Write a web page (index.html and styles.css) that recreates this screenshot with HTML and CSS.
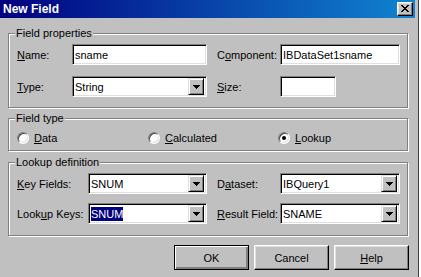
FILE: index.html
```html
<!DOCTYPE html>
<html lang="en">
<head>
    <meta charset="UTF-8">
    <title>New Field</title>
    <link rel="stylesheet" href="styles.css">
</head>
<body>
    <div class="window">
        <!-- Title bar -->
        <div class="titlebar">
            <span class="title">New Field</span>
            <div class="close">
                <svg width="8" height="7" viewBox="0 0 8 7"><path d="M0 0h2v1h-2zM6 0h2v1h-2zM1 1h2v1h-2zM5 1h2v1h-2zM2 2h4v1h-4zM3 3h2v1h-2zM2 4h4v1h-4zM1 5h2v1h-2zM5 5h2v1h-2zM0 6h2v1h-2zM6 6h2v1h-2z" fill="#000"/></svg>
            </div>
        </div>

        <!-- Field properties -->
        <fieldset class="group props">
            <legend>Field properties</legend>
            <label><u>N</u>ame:</label>
            <div class="edit">sname</div>
            <label>C<u>o</u>mponent:</label>
            <div class="edit">IBDataSet1sname</div>
            <label><u>T</u>ype:</label>
            <div class="edit combo"><span class="value">String</span><span class="drop"><svg width="7" height="4" viewBox="0 0 7 4"><path d="M0 0h7v1h-1v1h-1v1h-1v1h-1v-1h-1v-1h-1v-1h-1z" fill="#000"/></svg></span></div>
            <label><u>S</u>ize:</label>
            <div class="edit size"></div>
        </fieldset>

        <!-- Field type -->
        <fieldset class="group types">
            <legend>Field type</legend>
            <div class="radio"><span class="dot"></span><span><u>D</u>ata</span></div>
            <div class="radio"><span class="dot"></span><span><u>C</u>alculated</span></div>
            <div class="radio"><span class="dot checked"></span><span><u>L</u>ookup</span></div>
        </fieldset>

        <!-- Lookup definition -->
        <fieldset class="group lookup">
            <legend>Lookup definition</legend>
            <label><u>K</u>ey Fields:</label>
            <div class="edit combo"><span class="value">SNUM</span><span class="drop"><svg width="7" height="4" viewBox="0 0 7 4"><path d="M0 0h7v1h-1v1h-1v1h-1v1h-1v-1h-1v-1h-1v-1h-1z" fill="#000"/></svg></span></div>
            <label>D<u>a</u>taset:</label>
            <div class="edit combo"><span class="value">IBQuery1</span><span class="drop"><svg width="7" height="4" viewBox="0 0 7 4"><path d="M0 0h7v1h-1v1h-1v1h-1v1h-1v-1h-1v-1h-1v-1h-1z" fill="#000"/></svg></span></div>
            <label>Look<u>u</u>p Keys:</label>
            <div class="edit combo"><span class="value"><span class="selected">SNUM</span></span><span class="drop"><svg width="7" height="4" viewBox="0 0 7 4"><path d="M0 0h7v1h-1v1h-1v1h-1v1h-1v-1h-1v-1h-1v-1h-1z" fill="#000"/></svg></span></div>
            <label><u>R</u>esult Field:</label>
            <div class="edit combo"><span class="value">SNAME</span><span class="drop"><svg width="7" height="4" viewBox="0 0 7 4"><path d="M0 0h7v1h-1v1h-1v1h-1v1h-1v-1h-1v-1h-1v-1h-1z" fill="#000"/></svg></span></div>
        </fieldset>

        <!-- Buttons -->
        <div class="buttons">
            <div class="btn default">OK</div>
            <div class="btn">Cancel</div>
            <div class="btn"><u>H</u>elp</div>
        </div>
    </div>
</body>
</html>
```

FILE: styles.css
```css
body {
    margin: 0;
    background-color: #fff;
    font-family: "Liberation Sans", Arial, sans-serif;
    font-size: 11px;
    color: #000;
}
u {
    text-decoration-thickness: 1px;
    text-underline-offset: 1px;
}
.window {
    width: 415px;
    height: 277px;
    padding-right: 3px;
    border-right: 1px solid #404040;
    background-color: #c0c0c0;
    overflow: hidden;
}
.titlebar {
    height: 18px;
    display: flex;
    justify-content: space-between;
    align-items: center;
    padding: 0 2px 0 3px;
    background: linear-gradient(to right, #000080, #1084d0);
}
.title {
    color: #fff;
    font-weight: bold;
    font-size: 12px;
}
.close {
    width: 16px;
    height: 14px;
    box-sizing: border-box;
    display: flex;
    justify-content: center;
    align-items: center;
    padding: 0 1px 1px 0;
    background-color: #c0c0c0;
    border: 1px solid;
    border-color: #fff #000 #000 #fff;
    box-shadow: inset -1px -1px 0 #808080, inset 1px 1px 0 #dfdfdf;
}

/* group boxes */
.group {
    width: 400px;
    box-sizing: border-box;
    margin: 0 0 0 8px;
    min-width: 0;
    border: 1px solid #808080;
    box-shadow: 1px 1px 0 #fff, inset 1px 1px 0 #fff;
    display: grid;
    align-items: center;
}
.group legend {
    margin-left: -2px;
    padding: 0 1px;
    line-height: 13px;
    background-color: #c0c0c0;
}
.props {
    margin-top: 9px;
    padding: 4px 0 10px 8px;
    grid-template-columns: 55px 135px 73px 120px;
    grid-auto-rows: 21px;
    row-gap: 11px;
}
.types {
    margin-top: 4px;
    padding: 6px 0 6px 8px;
    grid-template-columns: 131px 130px 100px;
    grid-auto-rows: 13px;
}
.lookup {
    margin-top: 5px;
    padding: 4px 0 11px 8px;
    grid-template-columns: 71px 119px 73px 120px;
    grid-auto-rows: 21px;
    row-gap: 9px;
}
.group label {
    white-space: nowrap;
}
.group label:nth-of-type(even) {
    padding-left: 10px;
}

/* edits and combos */
.edit {
    height: 21px;
    box-sizing: border-box;
    display: flex;
    align-items: center;
    padding: 0 2px 0 2px;
    background-color: #fff;
    border: 1px solid;
    border-color: #808080 #fff #fff #808080;
    box-shadow: inset 1px 1px 0 #000, inset -1px -1px 0 #dfdfdf;
    white-space: nowrap;
}
.size {
    width: 56px;
}
.combo {
    padding-right: 2px;
}
.combo .value {
    flex: 1;
}
.selected {
    background-color: #000080;
    color: #fff;
    padding: 1px 0;
}
.drop {
    width: 16px;
    height: 17px;
    box-sizing: border-box;
    display: flex;
    justify-content: center;
    align-items: center;
    background-color: #c0c0c0;
    border: 1px solid;
    border-color: #dfdfdf #000 #000 #dfdfdf;
    box-shadow: inset 1px 1px 0 #fff, inset -1px -1px 0 #808080;
}

/* radio buttons */
.radio {
    display: flex;
    align-items: center;
    gap: 5px;
}
.dot {
    width: 12px;
    height: 12px;
    box-sizing: border-box;
    border-radius: 50%;
    background-color: #fff;
    border: 1px solid;
    border-color: #808080 #fff #fff #808080;
    box-shadow: inset 1px 1px 0 #404040, inset -1px -1px 0 #dfdfdf;
    display: flex;
    justify-content: center;
    align-items: center;
}
.dot.checked::after {
    content: "";
    width: 4px;
    height: 4px;
    border-radius: 50%;
    background-color: #000;
}

/* buttons */
.buttons {
    display: flex;
    justify-content: flex-end;
    gap: 5px;
    margin-top: 9px;
    padding-right: 6px;
}
.btn {
    width: 75px;
    height: 25px;
    box-sizing: border-box;
    display: flex;
    justify-content: center;
    align-items: center;
    border: 1px solid;
    border-color: #fff #000 #000 #fff;
    box-shadow: inset -1px -1px 0 #808080, inset 1px 1px 0 #dfdfdf;
}
.btn.default {
    border-color: #000;
    box-shadow: inset 1px 1px 0 #fff, inset -1px -1px 0 #808080, inset -2px -2px 0 #808080;
}
```
